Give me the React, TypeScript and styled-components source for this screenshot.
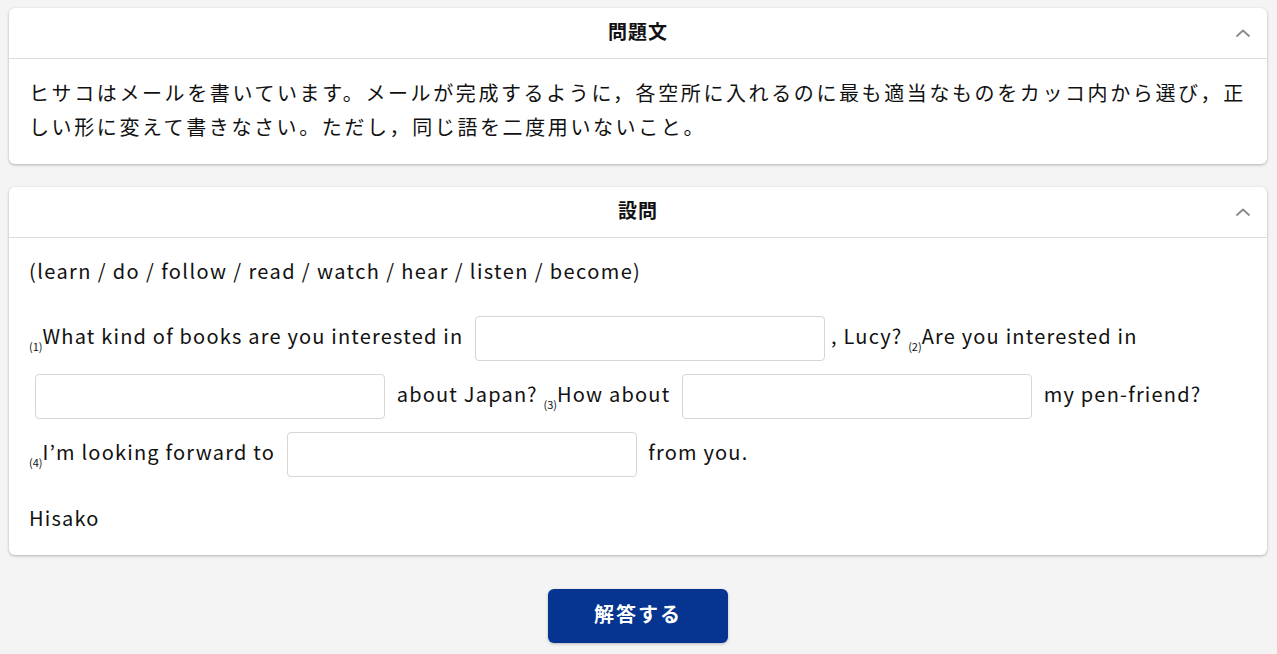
import React from "react";
import styled, { createGlobalStyle } from "styled-components";

const Global = createGlobalStyle`
  html, body { margin: 0; padding: 0; background: #f4f4f4; }
  body { font-family: "Noto Sans CJK JP", "Noto Sans", sans-serif; color: #111; }
`;

const Page = styled.div`
  padding: 8px 10px 11px 9px;
  display: flex;
  flex-direction: column;
`;

const Card = styled.section<{ $gap?: number }>`
  background: #fff;
  border-radius: 6px;
  box-shadow: 0 1px 3px rgba(0, 0, 0, 0.28);
  margin-bottom: ${(p) => p.$gap ?? 0}px;
  overflow: hidden;
`;

const Header = styled.header`
  height: 51px;
  box-sizing: border-box;
  padding-bottom: 5px;
  border-bottom: 1px solid #dcdcdc;
  display: flex;
  align-items: center;
  justify-content: center;
  position: relative;
`;

const Title = styled.h2`
  margin: 0;
  font-size: 19px;
  font-weight: 700;
  letter-spacing: 1px;
`;

const Toggle = styled.span`
  position: absolute;
  right: 16px;
  top: 50%;
  transform: translateY(-50%);
  display: flex;
`;

const Body = styled.div<{ $pt: number; $pb: number }>`
  padding: ${(p) => p.$pt}px 20px ${(p) => p.$pb}px 20px;
`;

const Instruction = styled.p`
  margin: 0;
  font-size: 20px;
  line-height: 34px;
  letter-spacing: 2.6px;
`;

const Choices = styled.p`
  margin: 0 0 23px;
  font-size: 20px;
  line-height: 26px;
  letter-spacing: 1.4px;
`;

const Passage = styled.p`
  margin: 0 0 20px;
  font-size: 20px;
  line-height: 58px;
  letter-spacing: 1.2px;
`;

const Num = styled.span`
  font-size: 11px;
  letter-spacing: 0;
  vertical-align: -7px;
  line-height: 0;
`;

const Blank = styled.input`
  box-sizing: border-box;
  width: 350px;
  height: 45px;
  margin: 0 6px;
  border: 1px solid #d6d6d6;
  border-radius: 4px;
  vertical-align: middle;
  font-size: 18px;
  font-family: inherit;
  padding: 0 10px;
  outline: none;
`;

const Signature = styled.p`
  margin: 0;
  font-size: 20px;
  line-height: 34px;
  letter-spacing: 1.2px;
`;

const Footer = styled.div`
  display: flex;
  justify-content: center;
  padding-top: 34px;
`;

const Submit = styled.button`
  width: 180px;
  height: 54px;
  padding: 0 0 6px;
  border: none;
  border-radius: 6px;
  background: #063591;
  color: #fff;
  font-family: "Noto Sans CJK JP", sans-serif;
  font-size: 20px;
  font-weight: 700;
  letter-spacing: 2px;
  box-shadow: 0 1px 3px rgba(0, 0, 0, 0.25);
  cursor: pointer;
`;

const Chevron = () => (
  <svg width="16" height="10" viewBox="0 0 16 10" fill="none">
    <path d="M2 8 L8 2.5 L14 8" stroke="#8a8a8a" strokeWidth="1.8" strokeLinecap="round" strokeLinejoin="round" />
  </svg>
);

const Panel: React.FC<{ title: string; gap?: number; children: React.ReactNode }> = ({ title, gap, children }) => (
  <Card $gap={gap}>
    <Header>
      <Title>{title}</Title>
      <Toggle>
        <Chevron />
      </Toggle>
    </Header>
    {children}
  </Card>
);

export default function App() {
  return (
    <>
      <Global />
      <Page>
        <Panel title="問題文" gap={23}>
          <Body $pt={17} $pb={20}>
            <Instruction>
              ヒサコはメールを書いています。メールが完成するように，各空所に入れるのに最も適当なものをカッコ内から選び，正しい形に変えて書きなさい。ただし，同じ語を二度用いないこと。
            </Instruction>
          </Body>
        </Panel>
        <Panel title="設問">
          <Body $pt={20} $pb={20}>
            <Choices>(learn / do / follow / read / watch / hear / listen / become)</Choices>
            <Passage>
              <Num>(1)</Num>What kind of books are you interested in <Blank />, Lucy? <Num>(2)</Num>Are you
              interested in <Blank /> about Japan? <Num>(3)</Num>How about <Blank /> my pen-friend?{" "}
              <Num>(4)</Num>I’m looking forward to <Blank /> from you.
            </Passage>
            <Signature>Hisako</Signature>
          </Body>
        </Panel>
        <Footer>
          <Submit>解答する</Submit>
        </Footer>
      </Page>
    </>
  );
}
